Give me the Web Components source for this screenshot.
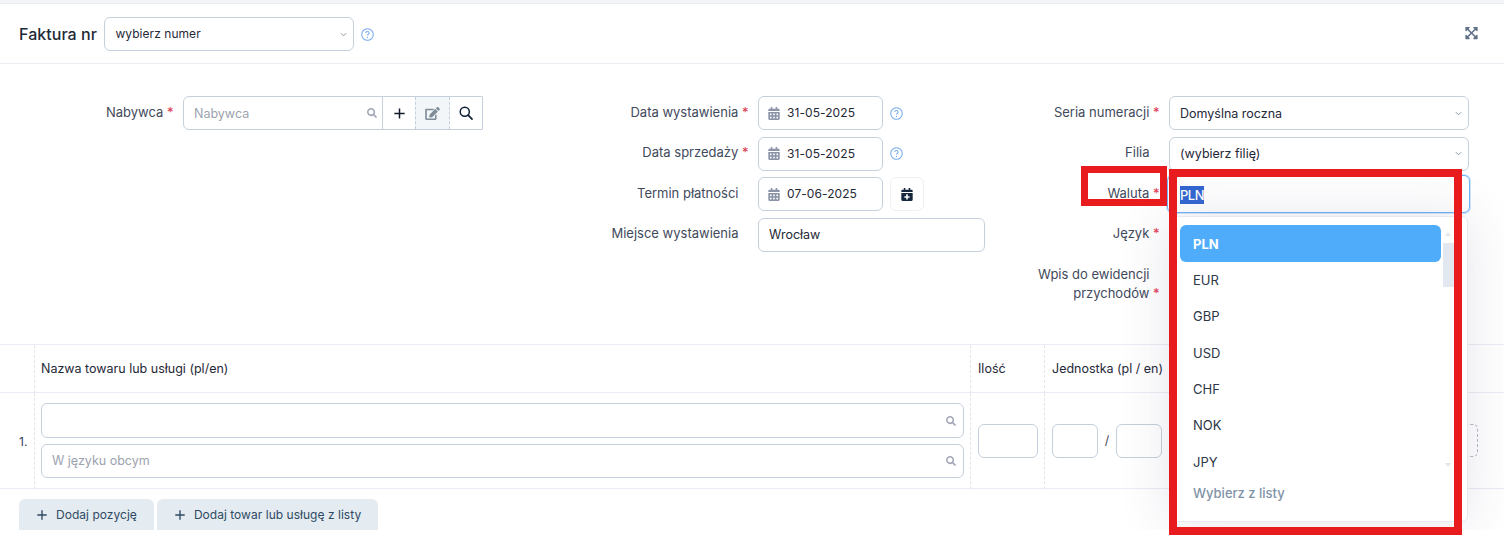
<!DOCTYPE html>
<html lang="pl"><head><meta charset="utf-8"><title>Faktura</title>
<style>
html,body{margin:0;padding:0;background:#fff}
body{font-family:Inter,"Noto Sans",sans-serif;font-size:13px;color:#1f2937}
</style></head><body>
<invoice-page></invoice-page>
<script>
const ICONS={
search:['0 0 512 512','<path fill="currentColor" d="M505 442.7L405.3 343c-4.5-4.5-10.6-7-17-7H372c27.6-35.3 44-79.7 44-128C416 93.1 322.9 0 208 0S0 93.1 0 208s93.1 208 208 208c48.3 0 92.7-16.4 128-44v16.3c0 6.4 2.5 12.5 7 17l99.7 99.7c9.4 9.4 24.6 9.4 33.9 0l28.3-28.3c9.4-9.4 9.4-24.6.1-34zM208 336c-70.7 0-128-57.2-128-128 0-70.7 57.2-128 128-128 70.7 0 128 57.2 128 128 0 70.7-57.2 128-128 128z"/>'],
loupe:['0 0 16 16','<circle cx="6.6" cy="6.6" r="5.2" fill="none" stroke="currentColor" stroke-width="1.7"/><path d="M10.5 10.5l4.4 4.4" stroke="currentColor" stroke-width="1.9" stroke-linecap="round"/>'],
plus:['0 0 14 14','<path d="M7 1.5v11M1.5 7h11" stroke="currentColor" stroke-width="1.6" fill="none"/>'],
edit:['0 0 576 512','<path fill="currentColor" d="M402.6 83.2l90.2 90.2c3.8 3.8 3.8 10 0 13.8L274.4 405.6l-92.8 10.3c-12.4 1.4-22.9-9.1-21.5-21.5l10.3-92.8L388.8 83.2c3.8-3.8 10-3.8 13.8 0zm162-22.9l-48.8-48.8c-15.2-15.2-39.9-15.2-55.2 0l-35.4 35.4c-3.8 3.8-3.8 10 0 13.8l90.2 90.2c3.8 3.8 10 3.8 13.8 0l35.4-35.4c15.2-15.3 15.2-40 0-55.2zM384 346.2V448H64V128h229.8c3.2 0 6.2-1.3 8.5-3.5l40-40c7.6-7.6 2.2-20.5-8.5-20.5H48C21.5 64 0 85.5 0 112v352c0 26.5 21.5 48 48 48h352c26.5 0 48-21.5 48-48V306.2c0-10.7-12.9-16-20.5-8.5l-40 40c-2.2 2.3-3.5 5.3-3.5 8.5z"/>'],
calendar:['0 0 448 512','<path fill="currentColor" d="M0 464c0 26.5 21.5 48 48 48h352c26.5 0 48-21.5 48-48V192H0v272zm320-196c0-6.6 5.4-12 12-12h40c6.6 0 12 5.4 12 12v40c0 6.6-5.4 12-12 12h-40c-6.6 0-12-5.4-12-12v-40zm0 128c0-6.6 5.4-12 12-12h40c6.6 0 12 5.4 12 12v40c0 6.6-5.4 12-12 12h-40c-6.6 0-12-5.4-12-12v-40zM192 268c0-6.6 5.4-12 12-12h40c6.6 0 12 5.4 12 12v40c0 6.6-5.4 12-12 12h-40c-6.6 0-12-5.4-12-12v-40zm0 128c0-6.6 5.4-12 12-12h40c6.6 0 12 5.4 12 12v40c0 6.6-5.4 12-12 12h-40c-6.6 0-12-5.4-12-12v-40zM64 268c0-6.6 5.4-12 12-12h40c6.6 0 12 5.4 12 12v40c0 6.6-5.4 12-12 12H76c-6.6 0-12-5.4-12-12v-40zm0 128c0-6.6 5.4-12 12-12h40c6.6 0 12 5.4 12 12v40c0 6.6-5.4 12-12 12H76c-6.6 0-12-5.4-12-12v-40zM400 64h-48V16c0-8.8-7.2-16-16-16h-32c-8.8 0-16 7.2-16 16v48H160V16c0-8.8-7.2-16-16-16h-32c-8.8 0-16 7.2-16 16v48H48C21.5 64 0 85.5 0 112v48h448v-48c0-26.5-21.5-48-48-48z"/>'],
calplus:['0 0 448 512','<path fill="currentColor" d="M436 160H12c-6.6 0-12-5.4-12-12v-36c0-26.5 21.5-48 48-48h48V12c0-6.6 5.4-12 12-12h40c6.6 0 12 5.4 12 12v52h128V12c0-6.6 5.4-12 12-12h40c6.6 0 12 5.4 12 12v52h48c26.5 0 48 21.5 48 48v36c0 6.6-5.4 12-12 12zM12 192h424c6.6 0 12 5.4 12 12v260c0 26.5-21.5 48-48 48H48c-26.5 0-48-21.5-48-48V204c0-6.6 5.4-12 12-12zm316 140c0-6.6-5.4-12-12-12h-60v-60c0-6.6-5.4-12-12-12h-40c-6.6 0-12 5.4-12 12v60h-60c-6.6 0-12 5.4-12 12v40c0 6.6 5.4 12 12 12h60v60c0 6.6 5.4 12 12 12h40c6.6 0 12-5.4 12-12v-60h60c6.6 0 12-5.4 12-12v-40z"/>'],
expand:['0 0 448 512','<path fill="currentColor" d="M448 344v112a23.94 23.94 0 0 1-24 24H312c-21.39 0-32.09-25.9-17-41l36.2-36.2L224 295.6 116.77 402.9 153 439c15.09 15.1 4.39 41-17 41H24a23.94 23.94 0 0 1-24-24V344c0-21.4 25.89-32.1 41-17l36.19 36.2L184.46 256 77.18 148.7 41 185c-15.1 15.1-41 4.4-41-17V56a23.94 23.94 0 0 1 24-24h112c21.39 0 32.09 25.9 17 41l-36.2 36.2L224 216.4l107.23-107.3L295 73c-15.09-15.1-4.39-41 17-41h112a23.94 23.94 0 0 1 24 24v112c0 21.4-25.89 32.1-41 17l-36.19-36.2L263.54 256l107.28 107.3L407 327.1c15.1-15.2 41-4.5 41 16.9z"/>'],
help:['0 0 14 14','<circle cx="7" cy="7" r="6.2" fill="none" stroke="currentColor" stroke-width="1.1"/><path d="M5.2 5.5c0-1 .8-1.7 1.8-1.7s1.8.7 1.8 1.6c0 1.3-1.8 1.4-1.8 2.8" fill="none" stroke="currentColor" stroke-width="1.1"/><circle cx="7" cy="10.2" r=".7" fill="currentColor"/>'],
chevron:['0 0 8 5','<path d="M1 1l3 3 3-3" fill="none" stroke="currentColor" stroke-width="1"/>']
};
class Base extends HTMLElement{
  constructor(){super();this.attachShadow({mode:'open'})}
  connectedCallback(){this.render()}
  a(n,d=''){return this.hasAttribute(n)?this.getAttribute(n):d}
}
customElements.define('ui-icon',class extends Base{
  render(){const[v,p]=ICONS[this.a('name')];const s=this.a('size','12');
    this.shadowRoot.innerHTML=`<style>:host{display:inline-flex;flex:none;color:${this.a('color','currentColor')}}svg{display:block;width:${s}px;height:${this.a('h',s)}px}</style><svg viewBox="${v}" aria-hidden="true">${p}</svg>`}
});
const FIELD=`:host{display:block;box-sizing:border-box;height:34px;flex:none}
.box{box-sizing:border-box;height:100%;border:1px solid #c5d0dc;border-radius:6px;background:#fff;display:flex;align-items:center;font:13px/1 Inter,sans-serif;color:#1f2937;position:relative}`;
customElements.define('select-box',class extends Base{
  render(){this.shadowRoot.innerHTML=`<style>${FIELD}
  :host{width:${this.a('w','300')}px}.box{padding:0 6px 0 10px;justify-content:space-between;font-size:${this.a('fs','12.5')}px;letter-spacing:${this.a('ls','0')}px}
  span{position:relative;top:${this.a('dy','1')}px}
  </style><div class="box"><span>${this.a('value')}</span><ui-icon name="chevron" size="7" h="5" color="#7c8a9a"></ui-icon></div>`}
});
customElements.define('text-box',class extends Base{
  render(){const h=this.a('h','34');this.shadowRoot.innerHTML=`<style>${FIELD}
  :host{width:${this.a('w','100')}px;height:${h}px}.box{padding:0 7px 0 10px;justify-content:space-between;font-size:12.5px}
  .ph{color:#9ca3af}</style><div class="box"><span>${this.a('value')}</span><span class="ph">${this.a('placeholder')}</span><span style="flex:1"></span>${this.hasAttribute('search')?'<ui-icon name="search" size="10" color="#a1a5b7"></ui-icon>':''}</div>`}
});
customElements.define('date-box',class extends Base{
  render(){this.shadowRoot.innerHTML=`<style>${FIELD}
  :host{width:125px}.box{padding:0 0 0 9px;gap:7px;font-size:12px}span{letter-spacing:.07px}
  </style><div class="box"><ui-icon name="calendar" size="12" h="13" color="#8a94a6"></ui-icon><span>${this.a('value')}</span></div>`}
});
customElements.define('buyer-group',class extends Base{
  render(){this.shadowRoot.innerHTML=`<style>:host{display:flex;width:300px;height:34px;box-sizing:border-box;border:1px solid #c5d0dc;border-radius:6px 0 0 6px;font:12.5px Inter,sans-serif}
  .in{flex:1;display:flex;align-items:center;justify-content:space-between;padding:0 5px 0 10px;color:#9ca3af}
  .b{width:32px;display:flex;align-items:center;justify-content:center;color:#111827;flex:none}
  .add{border-left:1px solid #c5d0dc;width:33px;box-sizing:border-box}.ed{box-sizing:border-box;width:35px;border-left:1px dashed #c5d0dc;border-right:1px dashed #c5d0dc;background:#f3f6f9}
  </style><div class="in"><span>Nabywca</span><ui-icon name="search" size="10" color="#a1a5b7"></ui-icon></div>
  <div class="b add"><ui-icon name="plus" size="13"></ui-icon></div>
  <div class="b ed"><ui-icon name="edit" size="15" h="13" color="#7e8c9a"></ui-icon></div>
  <div class="b"><ui-icon name="loupe" size="14" color="#0f1f33"></ui-icon></div>`}
});
customElements.define('form-row',class extends Base{
  render(){const req=this.hasAttribute('required');this.shadowRoot.innerHTML=`<style>:host{display:flex;min-height:34px;gap:10px;--lw:100px}
  label{width:var(--lw);box-sizing:border-box;flex:none;text-align:right;font:13px/19px Inter,sans-serif;color:#3f4a5c;padding-top:6.5px;padding-right:10px}
  i{font-style:normal;color:#e0334c;margin-right:-10px}.f{display:flex;gap:7px;align-items:center;height:34px}</style>
  <label>${this.a('label')}${req?' <i>*</i>':''}</label><div class="f"><slot></slot></div>`}
});
customElements.define('form-column',class extends Base{
  render(){this.shadowRoot.innerHTML=`<style>:host{display:flex;flex-direction:column;gap:6.67px;flex:none;width:${this.a('w')}px}</style><slot></slot>`}
});
customElements.define('invoice-header',class extends Base{
  render(){this.shadowRoot.innerHTML=`<style>:host{display:flex;align-items:center;height:61px;box-sizing:border-box;padding:0 26px 0 19px;border-bottom:1px solid #e9ecf1;border-top:1px solid #e9ecf1;margin-top:3px;gap:6px}
  h1{margin:0 1.5px 0 0;font:450 16px/1 Inter,sans-serif;letter-spacing:.05px;color:#1f2937}
  .sp{flex:1}select-box{margin-top:1px}</style>
  <h1>Faktura nr</h1><select-box w="250" value="wybierz numer" fs="12" ls=".05" dy="0"></select-box>
  <ui-icon name="help" size="13" color="#74a9ee" style="margin:2px 0 0 1px"></ui-icon><span class="sp"></span>
  <ui-icon name="expand" size="13" h="14" color="#5f7185" style="margin-top:-1px"></ui-icon>`}
});
customElements.define('line-table',class extends Base{
  render(){this.shadowRoot.innerHTML=`<style>:host{display:grid;grid-template-columns:35px 936px 74px 1fr;grid-template-rows:48px 96px;border-top:1px solid #e9ecf4;font:12.5px Inter,sans-serif;color:#1f2937}
  .c{box-sizing:border-box;border-right:1px dashed #e2e5ee;border-bottom:1px solid #e9ecf4;display:flex;padding:0 6px 0 6px;align-items:center}
  .h{padding-bottom:1px;font-weight:400}.n{padding:1px 0 0 19px;border-right:1px dashed #e2e5ee;font-size:12px;color:#33415a}
  .last{border-right:0;padding:0 26px 0 7px;justify-content:flex-start;gap:0}
  .col{flex-direction:column;gap:6px;align-items:stretch;padding:10px 6px 0;justify-content:flex-start}
  .slash{width:18px;text-align:center;color:#3f4a5c}.dash{margin-left:auto;width:33px;height:33px;box-sizing:border-box;border:1px dashed #aeb9c7;border-radius:5px}
  .q{padding:0 6px 0 7px}.h.q{padding-left:7px}
  </style>
  <div class="c"></div><div class="c h">Nazwa towaru lub usługi (pl/en)</div><div class="c h q">Ilość</div><div class="c h last">Jednostka (pl / en)</div>
  <div class="c n">1.</div>
  <div class="c col"><text-box w="923" h="35" search></text-box><text-box w="923" placeholder="W języku obcym" search></text-box></div>
  <div class="c q"><text-box w="60"></text-box></div>
  <div class="c last"><text-box w="46"></text-box><span class="slash">/</span><text-box w="46"></text-box><span class="dash"></span></div>`}
});
customElements.define('add-button',class extends Base{
  render(){this.shadowRoot.innerHTML=`<style>:host{display:inline-flex;align-items:center;height:31px;box-sizing:border-box;padding:0 17px;gap:8px;background:#e4ebf1;border-radius:6px 6px 0 0;font:400 12px Inter,sans-serif;letter-spacing:.03px;color:#2f4a63;white-space:nowrap}</style>
  <ui-icon name="plus" size="12" color="#2f4a63"></ui-icon><slot></slot>`}
});
customElements.define('currency-dropdown',class extends Base{
  render(){const items=['EUR','GBP','USD','CHF','NOK','JPY'];
  this.shadowRoot.innerHTML=`<style>:host{position:absolute;left:1167px;top:175px;width:303px;z-index:5;font:13px Inter,sans-serif;color:#2d3748}
  .inp{box-sizing:border-box;height:38px;border:1px solid #6fb3f7;border-radius:6px;box-shadow:0 0 0 1px #cfe6fd;background:#fff;padding:10px 12px 0;display:block;font-weight:500}
  mark{background:#3367d1;color:#fff;display:inline-block;height:18px;line-height:18px;letter-spacing:-.5px}
  .menu{position:absolute;left:2px;top:41px;width:299px;height:306px;box-sizing:border-box;background:#fff;border:1px solid #e6e9f0;border-radius:6px;box-shadow:0 0 50px rgba(82,63,105,.15);padding:8px 26px 0 10px}
  .o{height:36.4px;display:flex;align-items:center;padding-left:13px}
  .o.sel{height:37px;background:#4facfb;color:#fff;font-weight:700;border-radius:6px;margin-bottom:-.3px}
  .more{padding-left:13px;margin-top:5px;font-weight:500;color:#7f93a8}
  .bar{position:absolute;left:273px;top:10px;width:11px;height:240px}
  .thumb{position:absolute;left:0;top:16px;width:100%;height:44px;background:#e2e8f0}
  .up,.dn{position:absolute;left:2px;width:0;height:0;border-left:3.5px solid transparent;border-right:3.5px solid transparent}
  .up{top:5px;border-bottom:4px solid #e2e8f0}.dn{top:236px;border-top:4px solid #dfe5ee}
  </style><div class="inp"><mark>PLN</mark></div>
  <div class="menu"><div class="o sel">PLN</div>${items.map(i=>`<div class="o">${i}</div>`).join('')}
  <div class="more">Wybierz z listy</div><div class="bar"><div class="up"></div><div class="thumb"></div><div class="dn"></div></div></div>`}
});
customElements.define('mark-rect',class extends Base{
  render(){this.shadowRoot.innerHTML=`<style>:host{position:absolute;box-sizing:border-box;border:solid #e81c1e;border-width:${this.a('b','7')}px;left:${this.a('x')}px;top:${this.a('y')}px;width:${this.a('w')}px;height:${this.a('h')}px;z-index:10;pointer-events:none}</style>`}
});
customElements.define('calendar-button',class extends Base{
  render(){this.shadowRoot.innerHTML=`<style>:host{display:flex;align-items:center;justify-content:center;box-sizing:border-box;width:34px;height:34px;border:1px solid #edf0f5;border-radius:6px;color:#16283d}</style><ui-icon name="calplus" size="12" h="13"></ui-icon>`}
});
customElements.define('invoice-page',class extends Base{
  render(){this.shadowRoot.innerHTML=`<style>:host{display:block;position:relative;height:536px;width:1504px;overflow:hidden;background:#fff}
  .clip{height:530px;overflow:hidden;position:relative}
  .top{position:absolute;left:0;right:0;top:0;height:3px;background:#f3f4f7}
  .form{display:flex;height:280px;box-sizing:border-box;padding-top:32px}
  .c1 form-row{--lw:173.5px}.c2 form-row{--lw:248.5px}.c3 form-row{--lw:159.5px}
  .c1 form-row,.c2 form-row,.c3 form-row{gap:9.5px}
  .bottom{display:flex;gap:3px;padding:10px 19px 0}
  </style>
  <div class="clip"><div class="top"></div>
  <invoice-header></invoice-header>
  <div class="form">
    <form-column class="c1" w="500"><form-row label="Nabywca" required><buyer-group></buyer-group></form-row></form-column>
    <form-column class="c2" w="500">
      <form-row label="Data wystawienia" required><date-box value="31-05-2025"></date-box><ui-icon name="help" size="13" color="#74a9ee"></ui-icon></form-row>
      <form-row label="Data sprzedaży" required><date-box value="31-05-2025"></date-box><ui-icon name="help" size="13" color="#74a9ee"></ui-icon></form-row>
      <form-row label="Termin płatności"><date-box value="07-06-2025"></date-box><calendar-button></calendar-button></form-row>
      <form-row label="Miejsce wystawienia"><text-box w="227" value="Wrocław"></text-box></form-row>
    </form-column>
    <form-column class="c3" w="504">
      <form-row label="Seria numeracji" required><select-box value="Domyślna roczna"></select-box></form-row>
      <form-row label="Filia"><select-box value="(wybierz filię)"></select-box></form-row>
      <form-row label="Waluta" required></form-row>
      <form-row label="Język" required></form-row>
      <form-row label="Wpis do ewidencji przychodów" required></form-row>
    </form-column>
  </div>
  <line-table></line-table>
  <div class="bottom"><add-button>Dodaj pozycję</add-button><add-button>Dodaj towar lub usługę z listy</add-button></div>
  <currency-dropdown></currency-dropdown>
  </div>
  <mark-rect x="1081" y="166" w="86" h="40"></mark-rect>
  <mark-rect x="1169" y="169" w="293" h="366" b="8"></mark-rect>`}
});
</script>
</body></html>
